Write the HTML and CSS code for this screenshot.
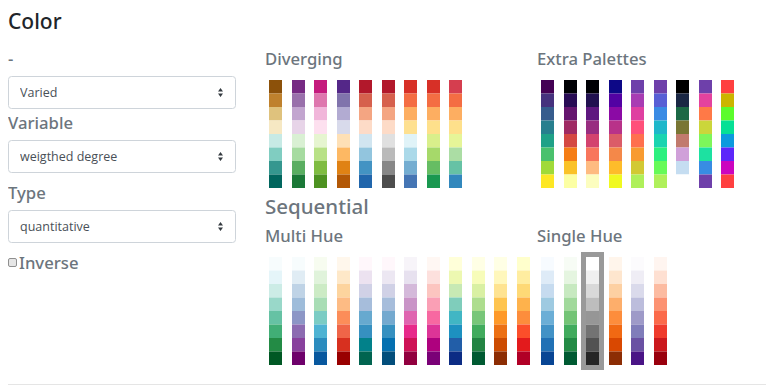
FILE: index.html
```html
<!DOCTYPE html>
<html lang="en">
<head>
    <meta charset="UTF-8">
    <meta name="viewport" content="width=device-width, initial-scale=1.0">
    <title>Color</title>
    <link rel="stylesheet" href="styles.css">
</head>
<body>
    <div class="panel">
        <h4 class="panel-title">Color</h4>

        <div class="layout">
            <div class="controls">
                <label class="field-label">-</label>
                <div class="select-wrap select-first">
                    <select class="select">
                        <option>Varied</option>
                    </select>
                    <svg class="select-arrow" width="5" height="9" viewBox="0 0 5 9"><path d="M2.5 0L0 3.6h5zM2.5 9L0 5.4h5z"/></svg>
                </div>

                <label class="field-label">Variable</label>
                <div class="select-wrap">
                    <select class="select">
                        <option>weigthed degree</option>
                    </select>
                    <svg class="select-arrow" width="5" height="9" viewBox="0 0 5 9"><path d="M2.5 0L0 3.6h5zM2.5 9L0 5.4h5z"/></svg>
                </div>

                <label class="field-label">Type</label>
                <div class="select-wrap">
                    <select class="select">
                        <option>quantitative</option>
                    </select>
                    <svg class="select-arrow" width="5" height="9" viewBox="0 0 5 9"><path d="M2.5 0L0 3.6h5zM2.5 9L0 5.4h5z"/></svg>
                </div>

                <label class="field-label check-label"><input type="checkbox" id="inverse">Inverse</label>
            </div>

            <div class="schemes">
                <div class="scheme-row">
                    <div class="scheme-group">
                        <h5 class="field-label group-title">Diverging</h5>
                        <div class="palette-list" id="diverging"></div>
                    </div>
                    <div class="scheme-group">
                        <h5 class="field-label group-title">Extra Palettes</h5>
                        <div class="palette-list" id="extra"></div>
                    </div>
                </div>

                <h4 class="scheme-title">Sequential</h4>

                <div class="scheme-row">
                    <div class="scheme-group">
                        <h5 class="field-label group-title">Multi Hue</h5>
                        <div class="palette-list" id="multi"></div>
                    </div>
                    <div class="scheme-group">
                        <h5 class="field-label group-title">Single Hue</h5>
                        <div class="palette-list" id="single"></div>
                    </div>
                </div>
            </div>
        </div>

        <hr class="divider">
    </div>

    <script>
        // 8-class schemes (colorbrewer + d3 continuous samples)
        const schemes = {
            diverging: [
                ['#8c510a', '#bf812d', '#dfc27d', '#f6e8c3', '#c7eae5', '#80cdc1', '#35978f', '#01665e'],
                ['#762a83', '#9970ab', '#c2a5cf', '#e7d4e8', '#d9f0d3', '#a6dba0', '#5aae61', '#1b7837'],
                ['#c51b7d', '#de77ae', '#f1b6da', '#fde0ef', '#e6f5d0', '#b8e186', '#7fbc41', '#4d9221'],
                ['#542788', '#8073ac', '#b2abd2', '#d8daeb', '#fee0b6', '#fdb863', '#e08214', '#b35806'],
                ['#b2182b', '#d6604d', '#f4a582', '#fddbc7', '#d1e5f0', '#92c5de', '#4393c3', '#2166ac'],
                ['#b2182b', '#d6604d', '#f4a582', '#fddbc7', '#e0e0e0', '#bababa', '#878787', '#4d4d4d'],
                ['#d73027', '#f46d43', '#fdae61', '#fee090', '#e0f3f8', '#abd9e9', '#74add1', '#4575b4'],
                ['#d73027', '#f46d43', '#fdae61', '#fee08b', '#d9ef8b', '#a6d96a', '#66bd63', '#1a9850'],
                ['#d53e4f', '#f46d43', '#fdae61', '#fee08b', '#e6f598', '#abdda4', '#66c2a5', '#3288bd']
            ],
            extra: [
                ['#440154', '#46327e', '#365c8d', '#277f8e', '#1fa187', '#4ac16d', '#a0da39', '#fde725'],
                ['#000004', '#280b54', '#65156e', '#9f2a63', '#d44842', '#f57d15', '#fac228', '#fcffa4'],
                ['#000004', '#221150', '#5f187f', '#982d80', '#d3436e', '#f8765c', '#febb81', '#fcfdbf'],
                ['#0d0887', '#5302a3', '#8b0aa5', '#b83289', '#db5c68', '#f48849', '#febc2a', '#f0f921'],
                ['#6e40aa', '#a83cb3', '#df40a1', '#ff507a', '#ff704e', '#f89b31', '#d2c934', '#aff05b'],
                ['#6e40aa', '#585fd5', '#3a8be4', '#1eb7ca', '#1ad4b0', '#2cf07f', '#66fa59', '#aff05b'],
                ['#000000', '#1a2744', '#1c6845', '#797634', '#c17a6d', '#d0a0d9', '#c5ddf1', '#ffffff'],
                ['#6e40aa', '#e4429e', '#ff7947', '#cbd63b', '#7ef65b', '#1de1a1', '#388ce3', '#6e40aa'],
                ['#ff4040', '#cbb500', '#5bfc2c', '#06e095', '#0c9ade', '#5d27fa', '#cb05bf', '#ff4040']
            ],
            multi: [
                ['#f7fcfd', '#e5f5f9', '#ccece6', '#99d8c9', '#66c2a4', '#41ae76', '#238b45', '#005824'],
                ['#f7fcfd', '#e0ecf4', '#bfd3e6', '#9ebcda', '#8c96c6', '#8c6bb1', '#88419d', '#6e016b'],
                ['#f7fcf0', '#e0f3db', '#ccebc5', '#a8ddb5', '#7bccc4', '#4eb3d3', '#2b8cbe', '#08589e'],
                ['#fff7ec', '#fee8c8', '#fdd49e', '#fdbb84', '#fc8d59', '#ef6548', '#d7301f', '#990000'],
                ['#fff7fb', '#ece2f0', '#d0d1e6', '#a6bddb', '#67a9cf', '#3690c0', '#02818a', '#016450'],
                ['#fff7fb', '#ece7f2', '#d0d1e6', '#a6bddb', '#74a9cf', '#3690c0', '#0570b0', '#034e7b'],
                ['#f7f4f9', '#e7e1ef', '#d4b9da', '#c994c7', '#df65b0', '#e7298a', '#ce1256', '#91003f'],
                ['#fff7f3', '#fde0dd', '#fcc5c0', '#fa9fb5', '#f768a1', '#dd3497', '#ae017e', '#7a0177'],
                ['#ffffd9', '#edf8b1', '#c7e9b4', '#7fcdbb', '#41b6c4', '#1d91c0', '#225ea8', '#0c2c84'],
                ['#ffffe5', '#f7fcb9', '#d9f0a3', '#addd8e', '#78c679', '#41ab5d', '#238443', '#005a32'],
                ['#ffffe5', '#fff7bc', '#fee391', '#fec44f', '#fe9929', '#ec7014', '#cc4c02', '#8c2d04'],
                ['#ffffcc', '#ffeda0', '#fed976', '#feb24c', '#fd8d3c', '#fc4e2a', '#e31a1c', '#b10026']
            ],
            single: [
                ['#f7fbff', '#deebf7', '#c6dbef', '#9ecae1', '#6baed6', '#4292c6', '#2171b5', '#084594'],
                ['#f7fcf5', '#e5f5e0', '#c7e9c0', '#a1d99b', '#74c476', '#41ab5d', '#238b45', '#005a32'],
                ['#ffffff', '#f0f0f0', '#d9d9d9', '#bdbdbd', '#969696', '#737373', '#525252', '#252525'],
                ['#fff5eb', '#fee6ce', '#fdd0a2', '#fdae6b', '#fd8d3c', '#f16913', '#d94801', '#8c2d04'],
                ['#fcfbfd', '#efedf5', '#dadaeb', '#bcbddc', '#9e9ac8', '#807dba', '#6a51a3', '#4a1486'],
                ['#fff5f0', '#fee0d2', '#fcbba1', '#fc9272', '#fb6a4a', '#ef3b2c', '#cb181d', '#99000d']
            ]
        };

        const SVG_NS = 'http://www.w3.org/2000/svg';
        const CELL_W = 13;
        const CELL_H = 13.5;

        function drawPalette(colors) {
            const svg = document.createElementNS(SVG_NS, 'svg');
            svg.setAttribute('width', CELL_W);
            svg.setAttribute('height', CELL_H * colors.length);
            colors.forEach((c, i) => {
                const rect = document.createElementNS(SVG_NS, 'rect');
                rect.setAttribute('x', 0);
                rect.setAttribute('y', i * CELL_H);
                rect.setAttribute('width', CELL_W);
                rect.setAttribute('height', CELL_H);
                rect.setAttribute('fill', c);
                svg.appendChild(rect);
            });
            return svg;
        }

        Object.keys(schemes).forEach(key => {
            const list = document.getElementById(key);
            schemes[key].forEach(colors => {
                const item = document.createElement('div');
                item.className = 'palette';
                item.appendChild(drawPalette(colors));
                item.addEventListener('click', () => {
                    document.querySelectorAll('.palette').forEach(p => p.classList.remove('selected'));
                    item.classList.add('selected');
                });
                list.appendChild(item);
            });
        });

        // Greys is the current choice
        document.querySelectorAll('#single .palette')[2].classList.add('selected');
    </script>
</body>
</html>
```

FILE: styles.css
```css
* {
    box-sizing: border-box;
}

body {
    margin: 8px 0 0 8px;
    background: #fff;
    color: #212529;
    font-family: "Open Sans", sans-serif;
}

.panel-title {
    margin: 1px 0 14px;
    font-family: "Noto Sans", "Open Sans", sans-serif;
    font-size: 21px;
    font-weight: 500;
    line-height: 25px;
}

.layout {
    display: grid;
    grid-template-columns: 228px 1fr;
    column-gap: 29px;
}

.field-label {
    display: block;
    margin: 0 0 7px;
    font-family: "Noto Sans", "Open Sans", sans-serif;
    font-size: 16.7px;
    font-weight: 500;
    line-height: 21px;
    color: #6c757d;
}

/* selects */
.select-wrap {
    position: relative;
    margin-bottom: 9px;
}

.select-wrap.select-first {
    margin-bottom: 2.5px;
}

.select {
    display: block;
    width: 100%;
    height: 33px;
    padding: 0 24px 0 11px;
    border: 1px solid #ced4da;
    border-radius: 3.5px;
    background: #fff;
    color: #495057;
    font-family: "Open Sans", sans-serif;
    font-size: 12.5px;
    -webkit-appearance: none;
    appearance: none;
}

.select-arrow {
    position: absolute;
    right: 13px;
    top: 12px;
    fill: #343a40;
    pointer-events: none;
}

.check-label {
    display: flex;
    align-items: center;
}

.check-label input {
    width: 9px;
    height: 9px;
    margin: 1px 2px 0 0;
    border: 1px solid #8f8f8f;
    border-radius: 2px;
    background: #e6e6e6;
    -webkit-appearance: none;
    appearance: none;
}

/* palettes */
.scheme-row {
    display: grid;
    grid-template-columns: 272px 1fr;
}

.group-title {
    margin-bottom: 11px;
}

.scheme-title {
    margin: 6px 0 6px;
    font-family: "Noto Sans", "Open Sans", sans-serif;
    font-size: 20.5px;
    font-weight: 500;
    line-height: 25px;
    color: #6c757d;
}

.palette-list {
    display: flex;
    gap: 9.5px;
    padding-left: 4px;
}

.palette {
    display: flex;
    cursor: pointer;
}

.palette.selected {
    outline: 5px solid #999;
}

.divider {
    margin: 19px 0 0;
    border: 0;
    border-top: 1px solid rgba(0, 0, 0, 0.1);
}
```
